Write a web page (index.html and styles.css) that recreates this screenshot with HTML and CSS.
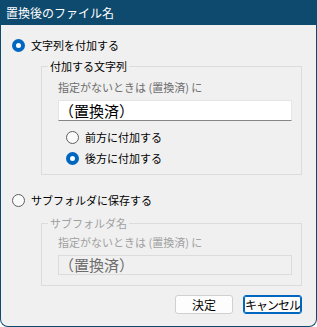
FILE: index.html
```html
<!DOCTYPE html>
<html lang="ja">
<head>
  <meta charset="UTF-8">
  <title>置換後のファイル名</title>
  <link rel="stylesheet" href="styles.css">
</head>
<body>
  <div class="window">
    <div class="titlebar">置換後のファイル名</div>
    <div class="content">
      <div class="radio-row">
        <span class="radio checked"></span>
        <span>文字列を付加する</span>
      </div>

      <fieldset class="group">
        <legend>付加する文字列</legend>
        <div class="group-body">
          <div class="hint">指定がないときは (置換済) に</div>
          <div class="textbox">（置換済）</div>
          <div class="sub-radios">
            <div class="radio-row">
              <span class="radio"></span>
              <span>前方に付加する</span>
            </div>
            <div class="radio-row">
              <span class="radio checked"></span>
              <span>後方に付加する</span>
            </div>
          </div>
        </div>
      </fieldset>

      <div class="radio-row second">
        <span class="radio"></span>
        <span>サブフォルダに保存する</span>
      </div>

      <fieldset class="group disabled">
        <legend>サブフォルダ名</legend>
        <div class="group-body">
          <div class="hint">指定がないときは (置換済) に</div>
          <div class="textbox">（置換済）</div>
        </div>
      </fieldset>

      <div class="buttons">
        <button class="btn">決定</button>
        <button class="btn default">キャンセル</button>
      </div>
    </div>
  </div>
</body>
</html>
```

FILE: styles.css
```css
/* Reset */
* {
  box-sizing: border-box;
  margin: 0;
  padding: 0;
}
body {
  font-family: "Noto Sans CJK JP", "Noto Sans", sans-serif;
  font-size: 11px;
  color: #000;
  background: #fff;
}
.window {
  width: 317px;
  height: 327px;
  background: #f0f0f0;
  border: 1px solid #0e4a6e;
  border-top: none;
  border-radius: 0 0 8px 8px;
  overflow: hidden;
}
.titlebar {
  height: 25px;
  background: #0e4a6e;
  color: #fff;
  font-size: 12px;
  line-height: 25px;
  padding-left: 6px;
  margin: 0 -1px;
}
.content {
  padding: 12px 14px 0 11px;
}
.radio-row {
  display: flex;
  align-items: center;
  height: 16px;
  line-height: 16px;
  gap: 6px;
}
.radio {
  width: 13px;
  height: 13px;
  border-radius: 50%;
  border: 1px solid #5f5f5f;
  background: #fafafa;
  flex-shrink: 0;
}
.radio.checked {
  border: 4px solid #0067c0;
  background: #fff;
}
/* Group boxes */
.group {
  border: 1px solid #dcdcdc;
  margin: 5px 0 0 29px;
  padding: 0;
}
.group legend {
  margin-left: 6px;
  padding: 0 2px;
  line-height: 16px;
}
.group-body {
  padding: 5px 9px 8px 16px;
}
.hint {
  color: #6d6d6d;
  line-height: 16px;
}
.textbox {
  height: 21px;
  margin-top: 5px;
  background: #fff;
  border: 1px solid #e5e5e5;
  border-bottom-color: #868686;
  font-size: 15px;
  line-height: 19px;
}
.sub-radios {
  display: flex;
  flex-direction: column;
  gap: 5px;
  margin-top: 8px;
  padding-left: 8px;
}
.radio-row.second {
  margin-top: 17px;
}
.group.disabled {
  margin-top: 7px;
}
.group.disabled legend,
.group.disabled .hint {
  color: #a0a0a0;
}
.group.disabled .group-body {
  padding-top: 3px;
  padding-bottom: 10px;
}
.group.disabled .textbox {
  background: #f0f0f0;
  border: 1px solid #dcdcdc;
  color: #6d6d6d;
  height: 20px;
  line-height: 18px;
}
/* Buttons */
.buttons {
  display: flex;
  justify-content: flex-end;
  gap: 10px;
  margin-top: 9px;
}
.btn {
  font-family: inherit;
  font-size: 12px;
  width: 58px;
  height: 19px;
  line-height: 15px;
  padding: 0;
  background: #fdfdfd;
  border: 1px solid #d0d0d0;
  border-radius: 3px;
  color: #000;
}
.btn.default {
  width: 59px;
  letter-spacing: -1px;
  border: 1px solid #0067c0;
  box-shadow: inset 0 0 0 1px #0067c0;
}
```
